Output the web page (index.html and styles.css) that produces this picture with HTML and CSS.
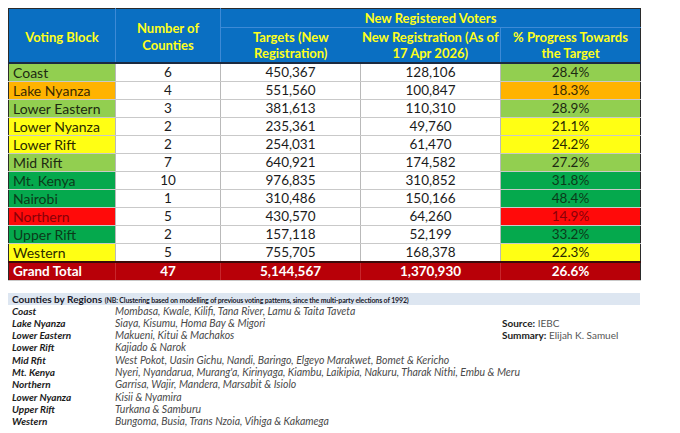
FILE: index.html
```html
<!DOCTYPE html>
<html lang="en">
<head>
<meta charset="utf-8">
<title>New Registered Voters</title>
<link rel="stylesheet" href="styles.css">
</head>
<body>
<div class="page">
<table class="vt">
  <colgroup>
    <col class="c1"><col class="c2"><col class="c3"><col class="c4"><col class="c5">
  </colgroup>
  <thead>
    <tr class="h1">
      <th rowspan="2" class="vb">Voting Block</th>
      <th rowspan="2" class="vl">Number of<br>Counties</th>
      <th colspan="3" class="band">New Registered Voters</th>
    </tr>
    <tr class="h2">
      <th class="vl">Targets (New<br>Registration)</th>
      <th>New Registration (As of<br>17 Apr 2026)</th>
      <th class="vl">% Progress Towards<br>the Target</th>
    </tr>
  </thead>
  <tbody>
    <tr><td class="blk lg">Coast</td><td>6</td><td>450,367</td><td>128,106</td><td class="lg">28.4%</td></tr>
    <tr><td class="blk or">Lake Nyanza</td><td>4</td><td>551,560</td><td>100,847</td><td class="or">18.3%</td></tr>
    <tr><td class="blk lg">Lower Eastern</td><td>3</td><td>381,613</td><td>110,310</td><td class="lg">28.9%</td></tr>
    <tr><td class="blk ye">Lower Nyanza</td><td>2</td><td>235,361</td><td>49,760</td><td class="ye">21.1%</td></tr>
    <tr><td class="blk ye">Lower Rift</td><td>2</td><td>254,031</td><td>61,470</td><td class="ye">24.2%</td></tr>
    <tr><td class="blk lg">Mid Rift</td><td>7</td><td>640,921</td><td>174,582</td><td class="lg">27.2%</td></tr>
    <tr><td class="blk dg">Mt. Kenya</td><td>10</td><td>976,835</td><td>310,852</td><td class="dg">31.8%</td></tr>
    <tr><td class="blk dg">Nairobi</td><td>1</td><td>310,486</td><td>150,166</td><td class="dg">48.4%</td></tr>
    <tr><td class="blk rd">Northern</td><td>5</td><td>430,570</td><td>64,260</td><td class="rd">14.9%</td></tr>
    <tr><td class="blk dg">Upper Rift</td><td>2</td><td>157,118</td><td>52,199</td><td class="dg">33.2%</td></tr>
    <tr><td class="blk ye">Western</td><td>5</td><td>755,705</td><td>168,378</td><td class="ye">22.3%</td></tr>
  </tbody>
  <tfoot>
    <tr class="total"><td class="blk">Grand Total</td><td>47</td><td>5,144,567</td><td>1,370,930</td><td>26.6%</td></tr>
  </tfoot>
</table>

<section class="regions">
  <div class="bar"><b>Counties by Regions</b> <span class="nb">(NB: Clustering based on modelling of previous voting patterns, since the multi-party elections of 1992)</span></div>
  <div class="grid">
    <div class="lab">Coast</div><div class="val">Mombasa, Kwale, Kilifi, Tana River, Lamu &amp; Taita Taveta</div>
    <div class="src"><p><b>Source:</b> IEBC</p><p><b>Summary:</b> Elijah K. Samuel</p></div>
    <div class="lab">Lake Nyanza</div><div class="val">Siaya, Kisumu, Homa Bay &amp; Migori</div>
    <div class="lab">Lower Eastern</div><div class="val">Makueni, Kitui &amp; Machakos</div>
    <div class="lab">Lower Rift</div><div class="val">Kajiado &amp; Narok</div>
    <div class="lab">Mid Rfit</div><div class="val">West Pokot, Uasin Gichu, Nandi, Baringo, Elgeyo Marakwet, Bomet &amp; Kericho</div>
    <div class="lab">Mt. Kenya</div><div class="val">Nyeri, Nyandarua, Murang'a, Kirinyaga, Kiambu, Laikipia, Nakuru, Tharak Nithi, Embu &amp; Meru</div>
    <div class="lab">Northern</div><div class="val">Garrisa, Wajir, Mandera, Marsabit &amp; Isiolo</div>
    <div class="lab">Lower Nyanza</div><div class="val">Kisii &amp; Nyamira</div>
    <div class="lab">Upper Rift</div><div class="val">Turkana &amp; Samburu</div>
    <div class="lab">Western</div><div class="val">Bungoma, Busia, Trans Nzoia, Vihiga &amp; Kakamega</div>
  </div>
</section>
</div>
</body>
</html>
```

FILE: styles.css
```css
html, body { background: #ffffff; }
body {
  margin: 8px;
  font-family: Lato, "Open Sans", "Liberation Sans", sans-serif;
  color: #111111;
}
.page { width: 632px; }

.vt {
  width: 632px;
  border-collapse: collapse;
  table-layout: fixed;
  border: 1px solid #2b2b2b;
}
.c1 { width: 107px; }
.c2 { width: 105px; }
.c3 { width: 140px; }
.c4 { width: 140px; }
.c5 { width: 140px; }

.vt th {
  background: #0a6fc2;
  color: #ffff1a;
  font-weight: 700;
  font-size: 13px;
  line-height: 16.5px;
  text-align: center;
  padding: 0;
  border: none;
  white-space: nowrap;
}
.vt th.vl { border-left: 1px solid #3d8ad6; }
.vt tr.h1 th.vb { border-left: none; }
.vt tr.h1 { height: 19px; }
.vt tr.h2 { height: 35px; }
.vt th.band { border-left: 1px solid #3d8ad6; border-bottom: 1px solid #3d8ad6; line-height: 17px; }
.vt thead tr.h2 th { border-bottom: 2px solid #1c2a40; vertical-align: bottom; padding-bottom: 0; }
.vt thead tr.h1 th.vb, .vt thead tr.h1 th.vl { border-bottom: 2px solid #1c2a40; padding-top: 3px; }

.vt td {
  height: 17px;
  padding: 0;
  font-size: 13.5px;
  line-height: 17px;
  text-align: center;
  border-bottom: 1px solid #c9c9c9;
  border-left: 1px solid #b9b9b9;
  color: #1b1b1b;
}
.vt td.blk { text-align: left; padding-left: 4px; border-left: none; font-size: 14px; }

.lg { background: #92cf50; color: #1d2a12 !important; }
.or { background: #ffb300; color: #3a2a00 !important; }
.ye { background: #ffff14; color: #2a2a00 !important; }
.dg { background: #05a94d; color: #0b3a1a !important; }
.rd { background: #ff0a0a; color: #8a0008 !important; }

.vt tfoot tr.total td {
  background: #b80008;
  color: #ffffff;
  font-weight: 700;
  border-top: 2px solid #3a0a0a;
  border-left: 1px solid #c8262c;
  height: 16px;
}
.vt tfoot tr.total td.blk { border-left: none; font-size: 13.5px; }

.regions { margin-top: 12px; }
.bar {
  background: #dde6f1;
  height: 12px;
  line-height: 12px;
  padding-left: 4px;
  white-space: nowrap;
  overflow: hidden;
  font-size: 10px;
  color: #1a1a2a;
}
.bar b { font-weight: 700; }
.bar .nb { font-size: 7px; font-weight: 700; letter-spacing: -0.15px; }

.grid {
  display: grid;
  grid-template-columns: 103px 387px 1fr;
  grid-auto-rows: 12.3px;
  padding-left: 4px;
  font-size: 10px;
  line-height: 12.3px;
}
.lab { font-weight: 700; font-style: italic; color: #1c1c1c; grid-column: 1; }
.val { font-style: italic; color: #4a4a4a; white-space: nowrap; grid-column: 2; font-size: 10.5px; }
.src { grid-column: 3; grid-row: 2 / span 2; font-size: 10px; color: #555555; }
.src p { margin: 0; line-height: 12.3px; }
.src b { color: #1c1c1c; }
```
